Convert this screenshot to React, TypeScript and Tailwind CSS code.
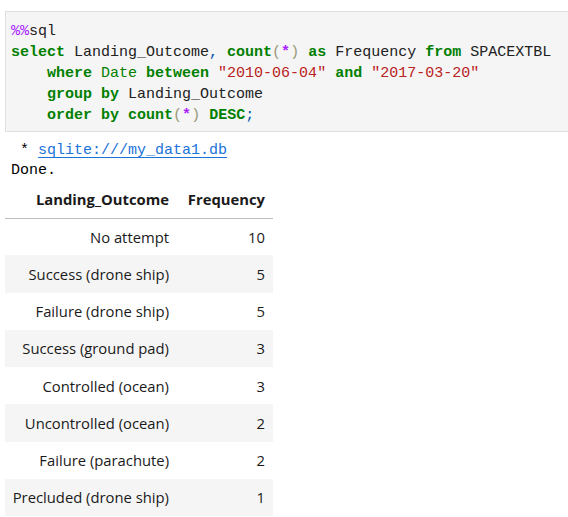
const rows: [string, number][] = [
  ['No attempt', 10],
  ['Success (drone ship)', 5],
  ['Failure (drone ship)', 5],
  ['Success (ground pad)', 3],
  ['Controlled (ocean)', 3],
  ['Uncontrolled (ocean)', 2],
  ['Failure (parachute)', 2],
  ['Precluded (drone ship)', 1],
];

const kw = 'font-bold text-[#008000]';
const str = 'text-[#ba2121]';
const paren = 'text-[#999977]';
const star = 'font-bold text-[#aa22ff]';

export default function App() {
  return (
    <div className="w-[568px] h-[517px] overflow-hidden bg-white">
      {/* input cell */}
      <div className="ml-[5px] mt-[11px] w-[600px] border-l border-t border-b border-[#e0e0e0] bg-[#f5f5f5] pl-[5px] pt-[9px] pb-[5px]">
        <pre className="font-['Liberation_Mono',monospace] text-[15px] leading-[21px] text-[#212121]">
          <span className="text-[#aa22ff]">%%</span>sql{'\n'}
          <span className={kw}>select</span> Landing_Outcome<span className="text-[#0055aa]">,</span>{' '}
          <span className={kw}>count</span>
          <span className={paren}>(</span>
          <span className={star}>*</span>
          <span className={paren}>)</span> <span className={kw}>as</span> Frequency{' '}
          <span className={kw}>from</span> SPACEXTBL{'\n'}
          {'    '}
          <span className={kw}>where</span> <span className="text-[#008000]">Date</span>{' '}
          <span className={kw}>between</span> <span className={str}>"2010-06-04"</span>{' '}
          <span className={kw}>and</span> <span className={str}>"2017-03-20"</span>{'\n'}
          {'    '}
          <span className={kw}>group</span> <span className={kw}>by</span> Landing_Outcome{'\n'}
          {'    '}
          <span className={kw}>order</span> <span className={kw}>by</span> <span className={kw}>count</span>
          <span className={paren}>(</span>
          <span className={star}>*</span>
          <span className={paren}>)</span> <span className={kw}>DESC</span>
          <span className="text-[#0055aa]">;</span>
        </pre>
      </div>

      {/* output */}
      <div className="mt-[9px] pl-[11px]">
        <pre className="font-['Liberation_Mono',monospace] text-[15px] leading-[20px] text-black">
          {' * '}
          <a href="#" className="text-[#1a73d9] underline underline-offset-[3px]">
            sqlite:///my_data1.db
          </a>
          {'\n'}Done.
        </pre>
      </div>

      <table className="ml-[5px] -mt-px w-[268px] table-fixed border-collapse font-['Open_Sans',sans-serif] text-[14.8px] text-[#1a1a1a]">
        <colgroup>
          <col className="w-[172px]" />
          <col className="w-[96px]" />
        </colgroup>
        <thead>
          <tr className="h-[38px] border-b border-[#bdbdbd]">
            <th className="px-2 text-right font-bold">Landing_Outcome</th>
            <th className="px-2 text-right font-bold">Frequency</th>
          </tr>
        </thead>
        <tbody>
          {rows.map(([name, n], i) => (
            <tr key={name} className={`h-[37.25px] ${i % 2 === 1 ? 'bg-[#f5f5f5]' : 'bg-white'}`}>
              <td className="pl-0 pr-2 text-right whitespace-nowrap">{name}</td>
              <td className="px-2 text-right">{n}</td>
            </tr>
          ))}
        </tbody>
      </table>
    </div>
  );
}
